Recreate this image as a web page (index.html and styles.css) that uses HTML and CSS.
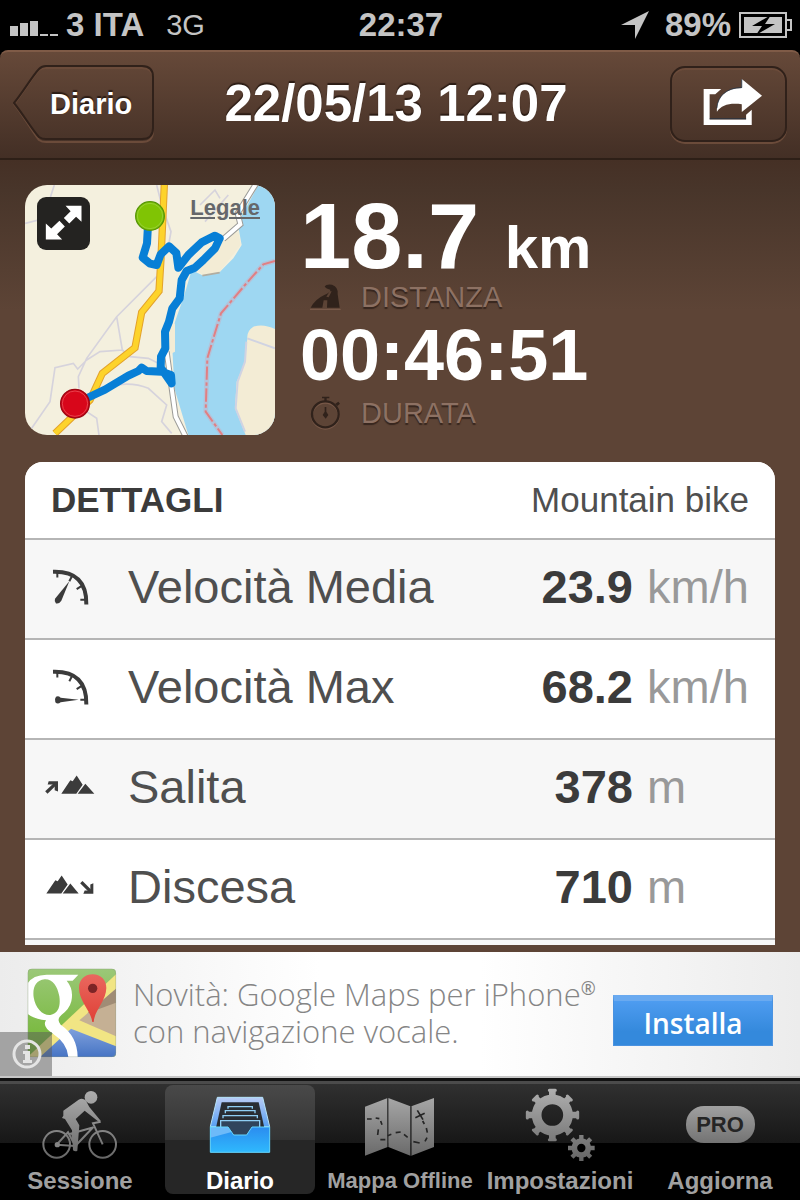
FILE: index.html
```html
<!DOCTYPE html>
<html lang="it">
<head>
    <meta charset="UTF-8">
    <meta name="viewport" content="width=device-width, initial-scale=1.0">
    <title>Diario</title>
    <link rel="stylesheet" href="styles.css">
</head>
<body>
    <div class="status-bar">
        <div class="status-left">
            <svg class="signal" viewBox="0 0 48 16" aria-hidden="true">
                <path d="M0 6h8v10H0zM10 3h8v13h-8zM20 1h8v15h-8zM30 14h8v2h-8zM40 14h8v2h-8z"/>
            </svg>
            <span>3 ITA</span>
            <span class="network">3G</span>
        </div>
        <span>22:37</span>
        <div class="status-right">
            <svg class="location" viewBox="0 0 28 28" aria-hidden="true">
                <path d="M28 0L14 28V14H0z"/>
            </svg>
            <span>89%</span>
            <svg class="battery" viewBox="0 0 53 26" aria-hidden="true">
                <path d="M1 1h46v7h5v10h-5v7H1z" fill="none" stroke="#c4c4c4" stroke-width="2"/>
                <path d="M47 8v10" stroke="#c4c4c4" stroke-width="2"/>
                <path d="M5 5h38v16H5z"/>
                <path d="M32 3L13 14h10L17 23 36 12H26z" fill="#000"/>
            </svg>
        </div>
    </div>

    <header class="nav-bar">
        <div class="nav-side">
            <a class="back-btn" href="#diario">
                <svg viewBox="0 0 142 78" aria-hidden="true">
                    <path d="M1 39C10 28 20 11 26 5Q29 3 33 3H129Q140 3 140 14V66Q140 77 129 77H33Q29 77 26 75C20 68 10 50 1 39z" fill="none" stroke="#6b4b3a" stroke-width="2"/>
                    <path d="M1 38C10 27 20 10 26 4Q29 1 33 1H129Q140 1 140 12V63Q140 74 129 74H33Q29 74 26 72C20 66 10 49 1 38z" fill="none" stroke="#30211a" stroke-width="2"/>
                </svg>
                <span>Diario</span>
            </a>
        </div>
        <h1>22/05/13 12:07</h1>
        <div class="nav-side nav-right">
            <button class="share-btn" type="button" aria-label="Condividi">
                <svg viewBox="908 228 184 146" aria-hidden="true">
                    <path d="M966 260H913V369H1058V323L1041 338V352H931V276H948z" fill="#fff"/>
                    <path d="M1028 230L1089 281 1028 330V306C990 302 967 308 953 329 952 285 978 258 1028 257z" fill="#fff"/>
                    <path d="M931 350H1041M953 318C955 280 985 256 1028 256V231" fill="none" stroke="#17304a" stroke-width="2"/>
                </svg>
            </button>
        </div>
    </header>

    <main>
        <section class="summary">
            <div class="map">
                <svg class="map-img" viewBox="30 30 750 750" aria-hidden="true">
                    <rect x="30" y="30" width="750" height="750" fill="#f4f0de"/>
                    <g fill="none" stroke="#d6d3dc" stroke-width="5">
                        <path d="M30 145L70 135 105 70 118 30M425 305L305 425 215 550 190 605 192 640M305 425L322 525 255 530 215 555M50 760L105 680 120 578 175 565 188 582 215 555M322 525L345 545 400 550 430 565M200 700L245 730 252 780M235 650Q330 610 400 640L455 690 440 740 470 775M425 30L440 90 468 170 460 215M555 90L600 45 615 70M570 140L640 60"/>
                    </g>
                    <path d="M730 30L668 145 680 210 655 250 615 290 565 302 530 285 508 360 480 440 470 480 478 640 505 730 520 780H780V30z" fill="#9ed7f2"/>
                    <path d="M670 170L677 210 614 291 565 300 530 275 625 185z" fill="#f3ecd5"/>
                    <path d="M614 293L562 302" stroke="#b2ada0" stroke-width="5"/>
                    <path d="M480 445L460 462V540L480 530z" fill="#f3ecd5"/>
                    <path d="M780 462Q745 445 715 455 695 468 697 490L690 560 665 620 660 700 692 780H780z" fill="#f3ecd5"/>
                    <path d="M697 490L780 520M694 500L690 560 668 620 662 700 690 770" fill="none" stroke="#d0d3e2" stroke-width="6"/>
                    <path d="M780 258L745 268 690 330 618 415 598 480 577 550 572 710 622 780" fill="none" stroke="#c2b6ca" stroke-width="14" opacity=".6"/>
                    <path d="M780 258L745 268 690 330 618 415 598 480 577 550 572 710 622 780" fill="none" stroke="#e17f83" stroke-width="6" stroke-dasharray="40 8 10 8"/>
                    <path d="M722 28L668 115 676 148 625 192M455 530L470 640 482 725 512 785" fill="none" stroke="#9b9b98" stroke-width="18"/>
                    <path d="M722 28L668 115 676 148 625 192M455 530L470 640 482 725 512 785" fill="none" stroke="#fff" stroke-width="12"/>
                    <path d="M448 28L438 250 432 348 380 412 360 518 262 595 225 675 120 775" fill="none" stroke="#e3a22c" stroke-width="22"/>
                    <path d="M448 28L438 250 432 348 380 412 360 518 262 595 225 675 120 775" fill="none" stroke="#fdd32b" stroke-width="16"/>
                    <path d="M399 150L396 205 383 248 405 266 425 270 437 238 462 214 484 234 490 278 520 240 560 202 600 182 614 190 600 220 565 255 540 278 515 288 500 315 494 370 472 400 462 440 450 470 451 520 438 545 437 578 470 625 468 600 440 590 395 588 380 578 370 588 340 602 270 644 210 672" fill="none" stroke="#087fd6" stroke-width="24" stroke-linejoin="round" stroke-linecap="round"/>
                    <circle cx="405" cy="123" r="43" fill="#80c404" stroke="#579509" stroke-width="4"/>
                    <circle cx="405" cy="123" r="38" fill="none" stroke="#a2d84a" stroke-width="2"/>
                    <circle cx="180" cy="686" r="43" fill="#d8061a" stroke="#9c0713" stroke-width="4"/>
                    <circle cx="180" cy="686" r="38" fill="none" stroke="#ee5d65" stroke-width="2"/>
                </svg>
                <button class="expand-btn" type="button" aria-label="Espandi mappa">
                    <svg viewBox="68 68 156 156" aria-hidden="true">
                        <path d="M199 94V141L183 126 163 146 147 130 167 110 152 94z" fill="#fff"/>
                        <path d="M94 146L110 161 134 138 150 155 127 178 142 193H94z" fill="#fff"/>
                    </svg>
                </button>
                <a class="legal" href="#legale">Legale</a>
            </div>
            <div class="stats">
                <p class="distance">18.7 <span>km</span></p>
                <p class="stat-label">
                    <svg viewBox="58 308 93 84" aria-hidden="true">
                        <path d="M58 387H150" stroke="#80604f" stroke-width="3"/>
                        <path fill-rule="evenodd" d="M60 382Q74 356 101 344 120 335 119 328 104 325 102 318 108 310 124 313 144 320 141 342L147 382zM99 360L95 382H109L110 360zM107 349L117 333H123L114 351z" fill="#30221b"/>
                    </svg>
                    DISTANZA
                </p>
                <p class="duration">00:46:51</p>
                <p class="stat-label">
                    <svg viewBox="60 643 93 101" aria-hidden="true">
                        <ellipse cx="106" cy="702" rx="40" ry="39" fill="none" stroke="#785848" stroke-width="6"/>
                        <ellipse cx="106" cy="698" rx="40" ry="39" fill="none" stroke="#30221b" stroke-width="7"/>
                        <path d="M96 645H118V650H110V660H103V650H96zM136 666L145 660 150 666 142 673zM104 676H109V690L115 700 107 711 98 700 104 690z" fill="#30221b"/>
                    </svg>
                    DURATA
                </p>
            </div>
        </section>

        <section class="details">
            <div class="details-head">
                <h2>DETTAGLI</h2>
                <span>Mountain bike</span>
            </div>
            <table>
                <tr>
                    <td class="icon">
                        <svg viewBox="75 80 150 110" aria-hidden="true">
                            <path d="M99 91Q201 88 199 189" fill="none" stroke="#3b3b3b" stroke-width="12"/>
                            <path d="M112 93V108M155 106L148 119M184 134L170 143M198 175H181" stroke="#3b3b3b" stroke-width="6"/>
                            <path d="M148 119L124 178Q118 188 108 186 102 180 105 172z" fill="#3b3b3b"/>
                        </svg>
                    </td>
                    <th scope="row">Velocità Media</th>
                    <td class="value">23.9</td>
                    <td class="unit">km/h</td>
                </tr>
                <tr>
                    <td class="icon">
                        <svg viewBox="75 80 150 110" aria-hidden="true">
                            <path d="M99 91Q201 88 199 189" fill="none" stroke="#3b3b3b" stroke-width="12"/>
                            <path d="M112 93V108M155 106L148 119M184 134L170 143M198 175H181" stroke="#3b3b3b" stroke-width="6"/>
                            <path d="M176 175L122 182Q113 190 106 182 102 174 108 166 115 162 122 169z" fill="#3b3b3b"/>
                        </svg>
                    </td>
                    <th scope="row">Velocità Max</th>
                    <td class="value">68.2</td>
                    <td class="unit">km/h</td>
                </tr>
                <tr>
                    <td class="icon">
                        <svg viewBox="77 682 150 110" aria-hidden="true">
                            <path d="M81 755L108 729" stroke="#3b3b3b" stroke-width="10"/>
                            <path d="M88 721H116V752L106 748V731H85z" fill="#3b3b3b"/>
                            <path d="M126 759L153 718 160 721 172 704 190 732 171 759zM175 759L198 729 225 759z" fill="#3b3b3b"/>
                        </svg>
                    </td>
                    <th scope="row">Salita</th>
                    <td class="value">378</td>
                    <td class="unit">m</td>
                </tr>
                <tr>
                    <td class="icon">
                        <svg viewBox="76 984 150 110" aria-hidden="true">
                            <path d="M80 1060L107 1020 114 1023 126 1006 144 1033 125 1060zM129 1060L152 1030 177 1060z" fill="#3b3b3b"/>
                            <path d="M185 1026L212 1053" stroke="#3b3b3b" stroke-width="10"/>
                            <path d="M221 1029V1061H191L195 1051H212V1033z" fill="#3b3b3b"/>
                        </svg>
                    </td>
                    <th scope="row">Discesa</th>
                    <td class="value">710</td>
                    <td class="unit">m</td>
                </tr>
            </table>
        </section>
    </main>

    <aside class="ad">
        <svg class="ad-icon" viewBox="81 86 270 270" aria-hidden="true">
            <defs>
                <linearGradient id="green" x1="0" y1="0" x2="0" y2="1">
                    <stop offset="0" stop-color="#9bc878"/>
                    <stop offset="1" stop-color="#6fb52e"/>
                </linearGradient>
                <linearGradient id="water" x1="0" y1="0" x2="0" y2="1">
                    <stop offset="0" stop-color="#7fa0dc"/>
                    <stop offset="1" stop-color="#4674c4"/>
                </linearGradient>
                <linearGradient id="pin" x1="0" y1="0" x2="0" y2="1">
                    <stop offset="0" stop-color="#e9685f"/>
                    <stop offset="1" stop-color="#e04036"/>
                </linearGradient>
                <clipPath id="tile"><rect x="83" y="88" width="265" height="265" rx="12"/></clipPath>
            </defs>
            <g clip-path="url(#tile)">
                <rect x="83" y="88" width="265" height="265" fill="url(#green)"/>
                <path d="M348 105L83 353H348z" fill="#f1e584"/>
                <path d="M348 148L238 243 348 291z" fill="#c5b094"/>
                <path d="M348 148L262 222 348 190z" fill="#a08c75"/>
                <path d="M213 268L348 321V353H120z" fill="url(#water)"/>
                <path fill-rule="evenodd" d="M83 132Q98 107 140 106H235L218 124H200Q222 150 214 186 208 210 185 226 168 240 182 256 232 290 233 353H205Q202 312 160 284 125 262 138 243 104 240 83 224zM134 120C107 122 97 146 101 174 106 207 128 229 151 227 176 223 182 199 178 171 172 140 158 119 134 120z" fill="#fff"/>
                <path d="M277 248C271 210 237 187 237 146 237 119 256 105 278 105 302 105 319 121 319 146 318 187 284 210 281 248z" fill="url(#pin)"/>
                <circle cx="278" cy="147" r="14" fill="#7c2426"/>
            </g>
            <rect x="84" y="89" width="263" height="263" rx="12" fill="none" stroke="#8d9a86" stroke-opacity=".5" stroke-width="2"/>
        </svg>
        <p>
            <span>Novità: Google Maps per iPhone<sup>®</sup></span>
            <span>con navigazione vocale.</span>
        </p>
        <button class="install-btn" type="button">Installa</button>
        <div class="ad-info">
            <svg viewBox="0 0 32 32" aria-hidden="true">
                <circle cx="16" cy="16" r="13" fill="none" stroke="#e4e4e4" stroke-width="3"/>
                <path d="M14 7h5v4h-5zM12 13h7v9h2v3h-9v-3h2v-6h-2z" fill="#e4e4e4"/>
            </svg>
        </div>
    </aside>

    <nav class="tab-bar">
        <a class="tab" href="#sessione">
            <svg viewBox="120 36 240 228" aria-hidden="true">
                <defs>
                    <linearGradient id="grey" gradientUnits="userSpaceOnUse" x1="0" y1="40" x2="0" y2="260">
                        <stop offset="0" stop-color="#b0b0b0"/>
                        <stop offset="1" stop-color="#646464"/>
                    </linearGradient>
                </defs>
                <circle cx="273" cy="67" r="19" fill="url(#grey)"/>
                <path d="M190 122V107L236 74Q247 67 257 76L268 96 302 137 296 140 254 107 227 132 238 151 232 227Q226 231 219 226L216 166 195 132 186 129z" fill="url(#grey)"/>
                <g fill="none" stroke="url(#grey)">
                    <circle cx="170" cy="208" r="40" stroke-width="6"/>
                    <circle cx="308" cy="208" r="40" stroke-width="6"/>
                    <path d="M170 209L204 172 226 213 280 156M170 209L226 213M206 178L276 158M308 208L279 145 302 140M226 213L216 175" stroke-width="6"/>
                </g>
                <circle cx="172" cy="209" r="8" fill="#858585"/>
            </svg>
            <span>Sessione</span>
        </a>
        <a class="tab active" href="#diario" aria-current="page">
            <svg viewBox="600 36 240 228" aria-hidden="true">
                <defs>
                    <linearGradient id="frame" x1="0" y1="0" x2="0" y2="1">
                        <stop offset="0" stop-color="#b9ccf6"/>
                        <stop offset="1" stop-color="#579ff2"/>
                    </linearGradient>
                    <linearGradient id="tray" x1="0" y1="0" x2="0" y2="1">
                        <stop offset="0" stop-color="#2b8cf0"/>
                        <stop offset="1" stop-color="#2fb9fd"/>
                    </linearGradient>
                </defs>
                <path d="M652 67H788L809 155H631z" fill="url(#frame)" stroke="#b5e4fb" stroke-width="3"/>
                <path d="M665 82H776L793 158H648z" fill="#292d33"/>
                <path d="M664 138H776L779 160 750 182H692L661 160z" fill="#30445c"/>
                <path d="M684 101V95H757V101M676 115V107H765V115M669 130V122H772V130M662 158V137H779V158" fill="none" stroke="#8fcef4" stroke-width="4"/>
                <path d="M631 156H684L701 180H740L756 156H809V232H631z" fill="url(#tray)"/>
                <path d="M631 156H684L695 171 631 188z" fill="#6dbaf9"/>
                <path d="M631 156H684L701 180H740L756 156H809V232H631z" fill="none" stroke="#65d7ff" stroke-width="3"/>
            </svg>
            <span>Diario</span>
        </a>
        <a class="tab tab-long" href="#mappa">
            <svg viewBox="1080 36 240 228" aria-hidden="true">
                <path d="M1095 95L1163 69V216L1095 242zM1165 69L1231 94V242L1165 216zM1234 94L1302 69V216L1234 242z" fill="url(#grey)"/>
                <path d="M1163 69V216M1233 94V242" stroke="#333" stroke-width="3"/>
                <path d="M1101 132H1115M1127 129L1138 131M1142 138L1146 149M1135 163L1133 180M1141 194H1156M1163 182L1174 178M1187 173L1202 171M1212 178L1223 187M1240 200L1259 204M1275 199L1281 188M1282 173L1279 159M1273 147L1268 138M1246 128L1274 115M1252 106L1269 134" fill="none" stroke="#252525" stroke-width="5"/>
            </svg>
            <span>Mappa Offline</span>
        </a>
        <a class="tab" href="#impostazioni">
            <svg viewBox="360 36 240 228" aria-hidden="true">
                <g fill="none" stroke="url(#grey)">
                    <circle cx="457" cy="120" r="47" stroke-width="29"/>
                    <path d="M457 70V46M457 170V194M407 120H382M507 120H533M422 85L406 69M492 85L508 69M422 155L406 171M492 155L508 171" stroke-width="20"/>
                    <path d="M448 46H466M448 194H466M382 111V129M533 111V129M400 75L412 63M502 63L514 75M400 165L412 177M502 177L514 165" stroke-width="9" stroke-linecap="round"/>
                    <circle cx="544" cy="219" r="21" stroke-width="17"/>
                    <path d="M544 196V180M544 242V258M521 219H504M567 219H584M528 203L516 191M560 203L572 191M528 235L516 247M560 235L572 247" stroke-width="13"/>
                </g>
            </svg>
            <span>Impostazioni</span>
        </a>
        <a class="tab" href="#aggiorna">
            <b class="pro">PRO</b>
            <span>Aggiorna</span>
        </a>
    </nav>
</body>
</html>
```

FILE: styles.css
```css
* {
    box-sizing: border-box;
}

body {
    display: flex;
    flex-direction: column;
    height: 100vh;
    margin: 0;
    overflow: hidden;
    background-color: #000;
    color: white;
    font-family: "Liberation Sans", Arial, Helvetica, sans-serif;
}

h1, h2, p {
    margin: 0;
}

svg {
    display: block;
    flex: none;
}

a {
    color: inherit;
    text-decoration: none;
}

button {
    padding: 0;
    border: none;
    background: none;
    cursor: pointer;
}

/* Status bar */
.status-bar {
    display: grid;
    grid-template-columns: 1fr auto 1fr;
    align-items: center;
    height: 50px;
    padding: 0 8px 0 10px;
    color: #c4c4c4;
    font-size: 33px;
    font-weight: bold;
}

.status-bar svg {
    fill: #c4c4c4;
}

.status-left, .status-right {
    display: flex;
    align-items: center;
    gap: 8px;
}

.status-right {
    justify-content: flex-end;
}

.signal {
    width: 48px;
    height: 16px;
    margin-top: 6px;
}

.network {
    margin-left: 14px;
    font-size: 29px;
    font-weight: normal;
}

.location {
    width: 28px;
    height: 28px;
    margin-right: 8px;
}

.battery {
    width: 53px;
    height: 26px;
}

/* Navigation bar */
.nav-bar {
    display: flex;
    align-items: center;
    height: 110px;
    padding: 0 13px 2px;
    border-top: 2px solid #7f5b47;
    border-bottom: 2px solid #2d1f17;
    border-radius: 8px 8px 0 0;
    background: linear-gradient(#664939, #432f25);
}

.nav-bar h1 {
    padding-right: 8px;
    font-size: 51px;
    line-height: 60px;
    text-shadow: 0 -2px 1px #2b1c14;
}

.nav-side {
    display: flex;
    flex: 1;
}

.nav-right {
    justify-content: flex-end;
}

.back-btn {
    display: grid;
    align-items: center;
    width: 142px;
    height: 78px;
    font-size: 29px;
    font-weight: bold;
    text-shadow: 0 -2px 1px #2b1c14;
}

.back-btn svg, .back-btn span {
    grid-area: 1 / 1;
}

.back-btn span {
    padding-left: 37px;
}

.share-btn {
    display: flex;
    align-items: center;
    justify-content: center;
    width: 117px;
    height: 76px;
    padding-left: 8px;
    padding-bottom: 4px;
    border: 2px solid #30211a;
    border-radius: 15px;
    box-shadow: 0 2px 0 #6b4b3a, inset 0 2px 0 #6b4b3a;
}

.share-btn svg {
    width: 61px;
    height: 49px;
}

/* Content */
main {
    display: flex;
    flex: 1;
    flex-direction: column;
    min-height: 0;
    padding: 25px 25px 7px;
    overflow: hidden;
    background: linear-gradient(#453025, #48352a 30px, #5d4436 150px);
}

.summary {
    display: flex;
    gap: 25px;
    margin-bottom: 27px;
}

.map {
    position: relative;
    flex: none;
    width: 250px;
    height: 250px;
    overflow: hidden;
    border-radius: 22px;
}

.map-img {
    width: 100%;
    height: 100%;
}

.expand-btn {
    position: absolute;
    top: 12px;
    left: 12px;
    width: 53px;
    height: 53px;
    border-radius: 9px;
    background-color: #242321;
}

.legal {
    position: absolute;
    top: 10px;
    right: 15px;
    color: #65676a;
    font-size: 22px;
    font-weight: bold;
    text-decoration: underline;
}

.stats {
    padding-top: 4px;
    font-weight: bold;
    white-space: nowrap;
}

.distance {
    font-size: 92px;
    line-height: 94px;
}

.distance span {
    font-size: 60px;
    line-height: 60px;
}

.duration {
    font-size: 72px;
    line-height: 88px;
}

.stat-label {
    display: flex;
    align-items: center;
    gap: 20px;
    height: 28px;
    padding-left: 10px;
    color: #8d7163;
    font-size: 29px;
    font-weight: normal;
    text-shadow: 0 2px 1px #37261e;
}

.stat-label svg {
    width: 31px;
}

/* Details */
.details {
    flex: 1;
    min-height: 0;
    overflow: hidden;
    border-radius: 18px 18px 0 0;
    background-color: #f7f7f7;
    color: #4f4f4f;
}

.details-head {
    display: flex;
    align-items: center;
    justify-content: space-between;
    height: 78px;
    padding: 0 26px;
    border-bottom: 2px solid #b5b5b5;
    background-color: white;
    font-size: 35px;
}

.details-head h2 {
    color: #3b3b3b;
    font-size: 35px;
}

table {
    width: 100%;
    border-collapse: separate;
    border-spacing: 0;
    font-size: 47px;
}

tr {
    background-color: #f7f7f7;
}

tr:nth-child(even) {
    background-color: white;
}

td, th {
    height: 100px;
    padding: 0 0 6px;
    border-bottom: 2px solid #b5b5b5;
    font-weight: normal;
    text-align: left;
    white-space: nowrap;
}

.icon {
    width: 103px;
    padding-left: 20px;
}

.icon svg {
    width: 50px;
    height: 37px;
}

.value {
    color: #3b3b3b;
    font-weight: bold;
    text-align: right;
}

.unit {
    width: 142px;
    padding-left: 14px;
    color: #999;
}

/* Banner */
.ad {
    position: relative;
    display: flex;
    align-items: center;
    gap: 16px;
    height: 126px;
    padding: 0 27px 2px;
    border-bottom: 2px solid #c6c6c6;
    background: linear-gradient(90deg, #ececec, #fff 40%, #fff 60%, #ececec);
    color: #858585;
    font-family: "Open Sans", sans-serif;
}

.ad-icon {
    width: 90px;
    height: 90px;
}

.ad p {
    flex: 1;
    min-width: 0;
    font-size: 31px;
    font-weight: 300;
    line-height: 37px;
    white-space: nowrap;
}

.ad p span {
    display: block;
}

.ad sup {
    font-size: 18px;
    font-weight: 400;
    line-height: 0;
}

.install-btn {
    flex: none;
    width: 160px;
    height: 51px;
    margin-top: 14px;
    border: 1px solid #4a92e0;
    border-top: 6px solid #6aaaf0;
    background: linear-gradient(#4e9cf0, #3489dc 70%);
    color: white;
    font-family: "Open Sans", sans-serif;
    font-size: 28px;
    font-weight: 600;
    line-height: 40px;
}

.ad-info {
    position: absolute;
    bottom: 0;
    left: 0;
    width: 52px;
    height: 44px;
    padding: 6px 11px;
    background-color: rgba(90, 90, 90, 0.5);
}

.ad-info svg {
    width: 32px;
    height: 32px;
}

/* Tab bar */
.tab-bar {
    display: grid;
    grid-template-columns: repeat(5, 1fr);
    gap: 10px;
    height: 122px;
    padding: 4px 5px 6px;
    border-top: 3px solid #111;
    background: linear-gradient(#4b4b4b 3px, #303030 3px, #171717 62px, #000 62px);
}

.tab {
    display: flex;
    flex-direction: column;
    align-items: center;
    justify-content: space-between;
    border-radius: 8px;
    color: #a0a0a0;
    font-size: 24px;
    font-weight: bold;
    line-height: 26px;
    white-space: nowrap;
}

.tab svg {
    width: 80px;
    height: 80px;
}

.tab-long {
    font-size: 22px;
}

.active {
    background: linear-gradient(#494949, #333 55px, #262626 55px);
    color: white;
}

.pro {
    width: 69px;
    height: 37px;
    margin-top: 21px;
    border-radius: 18px;
    background: linear-gradient(#a0a0a0, #737373);
    color: #252525;
    font-size: 22px;
    line-height: 38px;
    text-align: center;
}
```
